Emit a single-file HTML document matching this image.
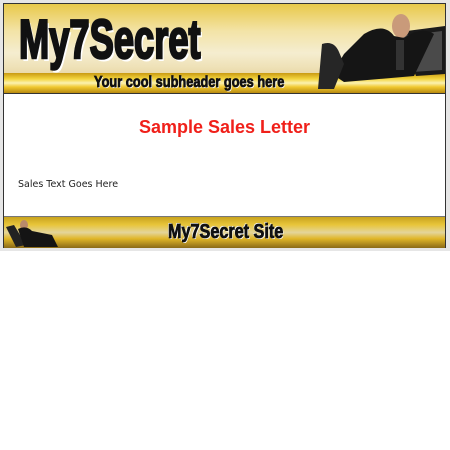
<!DOCTYPE html>
<html><head><style>
body{margin:0;width:450px;height:450px;background:#fff;font-family:"Liberation Sans",sans-serif;position:relative;overflow:hidden}
.wrap{position:absolute;left:0;top:0;width:450px;height:251px;background:#e6e6e6}
.box{position:absolute;left:3px;top:3px;width:441px;height:243px;border:1px solid #333;background:#fff}
.hdr{position:absolute;left:0;top:0;width:441px;height:89px;background:linear-gradient(180deg,#e8c94a 0%,#f3e3a6 30%,#f5edd0 55%,#efe2b8 70%,#dcc487 100%);overflow:hidden;border-bottom:1px solid #333}
.logo{position:absolute;left:15px;top:3px;font-size:55px;font-weight:bold;color:#111;transform:scaleX(0.66);transform-origin:left top;letter-spacing:0px;-webkit-text-stroke:2.5px #111;text-shadow:3px 3px 0 #fff,-1px -1px 0 #777}
.band{position:absolute;left:0;top:69px;width:441px;height:20px;background:linear-gradient(180deg,#c99a12 0%,#f4d640 30%,#fbf2b0 50%,#f0c830 70%,#b88a10 100%)}
.sub{position:absolute;left:90px;top:70px;font-size:16px;font-weight:bold;color:#111;transform:scaleX(0.8);transform-origin:left top;white-space:nowrap;-webkit-text-stroke:0.8px #111;text-shadow:1px 1px 0 #fff}
.title{position:absolute;left:0;width:441px;top:113px;text-align:center;color:#f0201a;font-weight:bold;font-size:18px}
.txt{position:absolute;left:14px;top:175px;font-size:9.5px;color:#222;font-family:"DejaVu Sans",sans-serif}
.ftr{position:absolute;left:0;top:212px;width:441px;height:31px;border-top:1px solid #777;background:linear-gradient(180deg,#c9a31e 0%,#e8c53a 25%,#e4d59a 50%,#e0b628 70%,#8a6a18 100%)}
.fs{position:absolute;left:164px;top:217px;font-size:20px;font-weight:bold;color:#111;transform:scaleX(0.81);transform-origin:left top;white-space:nowrap;-webkit-text-stroke:0.8px #111;text-shadow:1px 1px 0 #fff,-1px -1px 0 #fff}
</style></head><body>
<div class="wrap"><div class="box">
<div class="hdr">
<div class="band"></div>
<svg style="position:absolute;left:300px;top:0" width="141" height="89">
<polygon points="95,28 141,22 141,70 112,72" fill="#1a1a1a"/>
<polygon points="98,32 138,27 138,66 108,68" fill="#4a4a4a"/>
<ellipse cx="97" cy="22" rx="9" ry="12" fill="#c99a7a"/>
<path d="M60,30 Q80,18 90,32 L100,34 Q118,22 130,30 L110,72 L40,78 L28,70 L40,50 Z" fill="#151515"/>
<path d="M18,40 Q30,36 35,48 L40,60 L30,85 L14,85 Z" fill="#262626"/>
<rect x="92" y="36" width="8" height="30" fill="#333"/>
</svg>
<div class="logo">My7Secret</div>
<div class="sub">Your cool subheader goes here</div>
</div>
<div class="title">Sample Sales Letter</div>
<div class="txt">Sales Text Goes Here</div>
<div class="ftr">
<svg style="position:absolute;left:0;top:0" width="56" height="30">
<polygon points="2,10 10,8 22,28 12,30" fill="#222"/>
<ellipse cx="20" cy="8" rx="4" ry="5" fill="#b98a6a"/>
<path d="M14,12 Q22,8 28,14 L48,18 L54,30 L20,30 Z" fill="#141414"/>
</svg>
</div>
<div class="fs">My7Secret Site</div>
</div></div>
</body></html>
